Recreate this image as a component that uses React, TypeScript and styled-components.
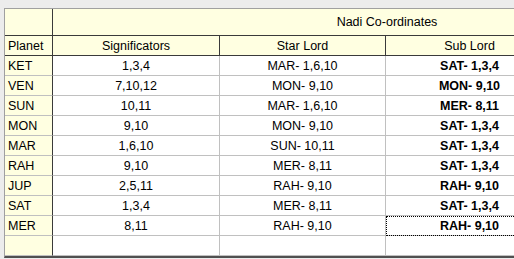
import { Fragment } from "react";
import styled, { createGlobalStyle, css } from "styled-components";

const GlobalStyle = createGlobalStyle`
  html, body {
    margin: 0;
    padding: 0;
    background: #ececec;
    overflow: hidden;
  }
`;

const Page = styled.div`
  width: 514px;
  height: 259px;
  padding: 8px 0 0 4px;
  box-sizing: border-box;
  overflow: hidden;
  font-family: "Liberation Sans", Arial, sans-serif;
  font-size: 12.5px;
  color: #000;
`;

const Frame = styled.div`
  width: max-content;
  border-top: 1px solid #a0a0a0;
  border-left: 1px solid #a0a0a0;
  border-bottom: 2px solid #505050;
`;

const Grid = styled.div`
  display: grid;
  grid-template-columns: 48px 167px 166px 168px;
  grid-template-rows: 27px 20px repeat(10, 20px);
`;

type CellProps = {
  $cream?: boolean;
  $align?: "left" | "center";
  $darkRight?: boolean;
  $darkBottom?: boolean;
  $bold?: boolean;
  $span?: number;
  $focused?: boolean;
};

const Cell = styled.div<CellProps>`
  box-sizing: border-box;
  display: flex;
  align-items: center;
  white-space: nowrap;
  overflow: hidden;
  ${({ $cream, $align, $darkRight, $darkBottom, $bold, $span, $focused }) => css`
    background: ${$cream ? "#ffffe1" : "#ffffff"};
    justify-content: ${$align === "left" ? "flex-start" : "center"};
    padding-left: ${$align === "left" ? 3 : 0}px;
    border-right: 1px solid ${$darkRight ? "#3a3a3a" : "#c0c0c0"};
    border-bottom: 1px solid ${$darkBottom ? "#3a3a3a" : "#c0c0c0"};
    font-weight: ${$bold ? "bold" : "normal"};
    ${$span ? `grid-column: span ${$span};` : ""}
    ${$focused ? "outline: 1px dotted #000; outline-offset: -1px;" : ""}
  `}
`;

// group title is centred over star/sub lord, though it spans from significators
const GroupTitle = styled(Cell)`
  padding-left: 168px;
`;

const rows = [
  ["KET", "1,3,4", "MAR- 1,6,10", "SAT- 1,3,4"],
  ["VEN", "7,10,12", "MON- 9,10", "MON- 9,10"],
  ["SUN", "10,11", "MAR- 1,6,10", "MER- 8,11"],
  ["MON", "9,10", "MON- 9,10", "SAT- 1,3,4"],
  ["MAR", "1,6,10", "SUN- 10,11", "SAT- 1,3,4"],
  ["RAH", "9,10", "MER- 8,11", "SAT- 1,3,4"],
  ["JUP", "2,5,11", "RAH- 9,10", "RAH- 9,10"],
  ["SAT", "1,3,4", "MER- 8,11", "SAT- 1,3,4"],
  ["MER", "8,11", "RAH- 9,10", "RAH- 9,10"],
  ["", "", "", ""],
];

export default function App() {
  return (
    <Page>
      <GlobalStyle />
      <Frame>
        <Grid>
          <Cell $cream $darkRight $darkBottom />
          <GroupTitle $cream $span={3} $darkBottom>
            Nadi Co-ordinates
          </GroupTitle>

          <Cell $cream $align="left" $darkRight $darkBottom>
            Planet
          </Cell>
          <Cell $cream $darkRight $darkBottom>
            Significators
          </Cell>
          <Cell $cream $darkRight $darkBottom>
            Star Lord
          </Cell>
          <Cell $cream $darkBottom>
            Sub Lord
          </Cell>

          {rows.map(([planet, sig, star, sub], i) => (
            <Fragment key={i}>
              <Cell $cream $align="left" $darkRight>
                {planet}
              </Cell>
              <Cell>{sig}</Cell>
              <Cell>{star}</Cell>
              <Cell $bold $focused={planet === "MER"}>
                {sub}
              </Cell>
            </Fragment>
          ))}
        </Grid>
      </Frame>
    </Page>
  );
}
